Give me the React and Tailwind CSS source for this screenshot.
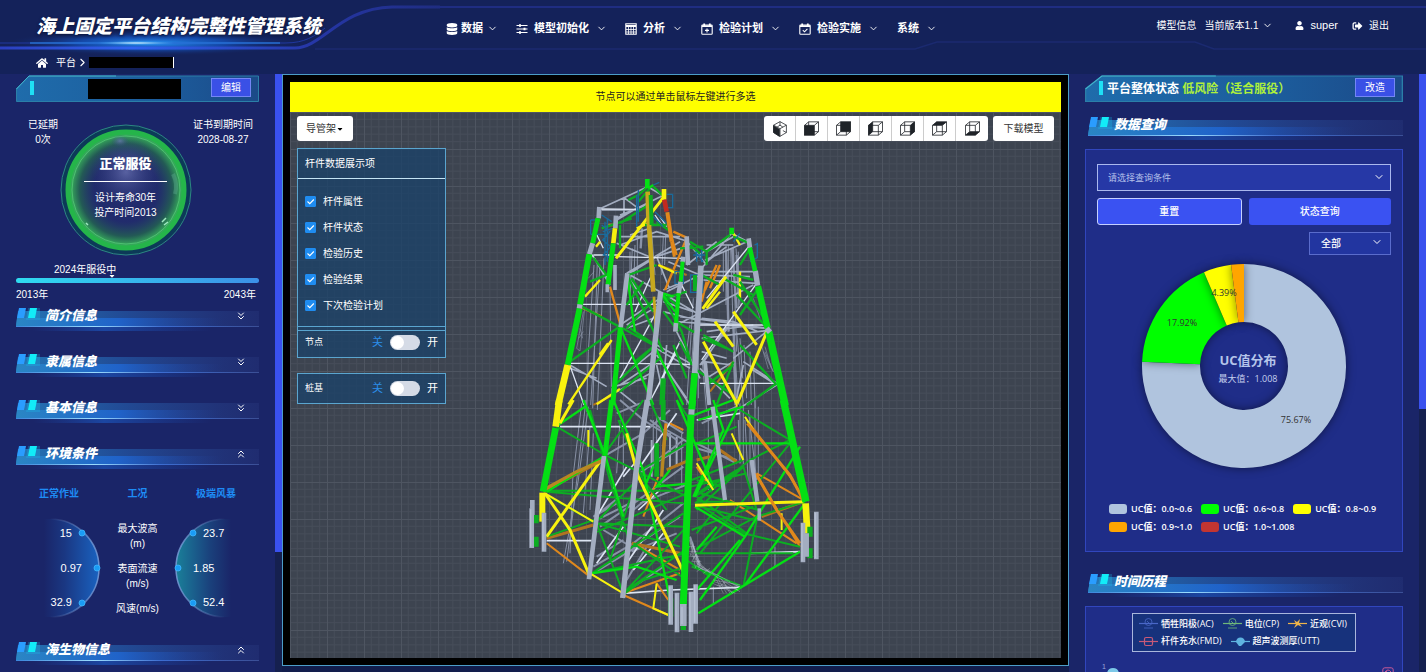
import React, { useId, useState } from 'react';
import { FaCaretDown, FaDatabase, FaHome, FaSignOutAlt, FaUser } from 'react-icons/fa';
import { ChevronDown, ChevronRight, ChevronsDown, ChevronsUp } from 'lucide-react';

const menuItems = [
  { label: '数据', icon: 'database' },
  { label: '模型初始化', icon: 'sliders' },
  { label: '分析', icon: 'calc' },
  { label: '检验计划', icon: 'calPlus' },
  { label: '检验实施', icon: 'calCheck' },
  { label: '系统', icon: null },
];

const displayOptions = ['杆件属性', '杆件状态', '检验历史', '检验结果', '下次检验计划'];

const ucRanges = [
  { label: 'UC值：0.0~0.6', color: '#b0c4de', value: 75.67, text: '75.67%', at: [155, 160] },
  { label: 'UC值：0.6~0.8', color: '#00ff00', value: 17.92, text: '17.92%', at: [41, 63] },
  { label: 'UC值：0.8~0.9', color: '#ffff00', value: 4.39, text: '4.39%', at: [83, 33] },
  { label: 'UC值：0.9~1.0', color: '#ffa500', value: 2.02 },
  { label: 'UC值：1.0~1.008', color: '#c23531', value: 0 },
];

const inspections = [
  { label: '牺牲阳极(AC)', color: '#4a67c8', mark: 'anode' },
  { label: '电位(CP)', color: '#6fb87a', mark: 'anode' },
  { label: '近观(CVI)', color: '#f0b54a', mark: 'spark' },
  { label: '杆件充水(FMD)', color: '#c85a78', mark: 'box' },
  { label: '超声波测厚(UTT)', color: '#5fb4e0', mark: 'gauge' },
];

const GREEN = '#04e014';
const DGREEN = '#0cae22';
const GREY = '#a3adc0';
const DGREY = '#8992a6';
const WHITE = '#dce4f2';
const YELLOW = '#f8f20e';
const ORANGE = '#e0881c';
const BROWN = '#b07420';
const TEAL = '#1a6b9c';

// members of the upper half of the jacket, back to front
const upperMembers = [
  [DGREY, 3, 'M222 300L205 560L200 740M232 290L218 730M240 300L212 720M252 280L232 735M270 380L275 720M330 260V380M337 250L330 400M345 240L340 420M352 210V330M395 200L405 330M430 215L425 330M437 210L434 300M520 400L500 720M510 480L495 600M525 460L515 600M535 450V700M548 600L560 740M610 260V380M618 250V420M625 240V500M632 250L640 500M640 245L650 560M648 250L660 420M655 260V430M640 480L655 720M650 500L670 720M660 520L668 640M672 540L680 700M690 560L694 720M640 540L645 720M700 580L706 730'],
  [DGREY, 7, 'M618 255L626 500M636 250L650 430M650 270L656 400M640 470L648 720M366 190L362 250'],
  [DGREY, 2, 'M190 440L170 550L180 558L194 430M176 520L190 500M180 490L188 520M205 340L222 320M700 400L720 460M730 560L760 620L735 560M724 540L745 612M735 545L754 610'],
  [GREY, 5, 'M238 132L312 98L383 65M245 135H360M312 98L352 128M312 98V150M290 160L432 90M300 150L380 120M290 165L350 130M383 65L430 92M300 240L410 200L500 228M290 235L400 280M330 210L390 190M300 215H480M320 325L480 230M410 275L498 245M410 275L450 375M410 275L330 325M220 275L270 360M445 290L540 330M498 225L560 300M500 300L590 230M545 310L635 205L686 232M555 285L686 228M560 260L640 215M560 240H640M545 320H700M550 330L690 335M550 345L710 355M560 290L620 245M470 480L700 360M430 440L530 465M430 410L520 440M440 380L540 330M330 330L420 380L540 450M330 345L400 440M300 480L420 400M320 480L410 425M320 490L400 460M470 470L740 490M480 455L745 490M630 470L545 600M640 580L745 495M560 500L700 480M540 600L630 480M550 590L640 600M545 560L620 580M560 640L640 590M540 610L630 700M670 590L770 655M690 610L770 660M670 600L650 700M770 660L650 735M150 600L260 665M150 610L230 640M410 540L520 600M400 545L510 610M400 560L300 640M410 570L500 700M300 660L390 600M280 665L380 640M290 680L400 620M300 680L350 720M410 600L430 690M440 540L430 660M470 500L540 640M425 590L510 720M440 400L500 380M430 375L480 355M545 520L740 497M545 460L640 470L715 500'],
  [WHITE, 4, 'M238 132L352 133M215 268L270 350M220 270H300M290 275L490 280M185 418H420M150 595H340L510 598M300 640L410 440M345 440L395 330M395 700L480 530M400 690L470 560M710 355L545 585M690 240L560 400M480 350L520 430M540 480H745M540 655H770M150 602L192 720M420 155L440 185M405 150L425 180M228 205L250 250'],
  [ORANGE, 7, 'M460 200L500 218M435 375L500 220M450 200L470 270M590 300L555 375M600 300L570 370M265 180H290M180 425L245 455M270 365L300 475M560 350L545 410'],
  [BROWN, 6, 'M415 300L500 330M280 690L220 720M570 680L640 590'],
  [YELLOW, 7, 'M384 175L350 190M240 345L195 395M228 245L240 230M600 380L560 430M640 205L660 240M660 320V400M415 300L470 325M145 718L275 525M230 718L300 672'],
  [DGREEN, 7, 'M245 190L335 160M300 175L385 120M355 110L390 70M325 105L355 90L383 65M400 65L432 95M300 250V180M220 278L260 330M210 350L270 325M185 425L298 485L150 590M300 485L400 540M322 330L430 560M335 340L400 440M325 330L410 300M320 420L370 350M425 385L470 420M425 390L485 500L515 600M430 440L475 500M405 540L330 490M430 400L500 380M405 540L275 670M420 580L300 680M345 590L400 545M510 230L560 260L630 210M560 260V300M510 240L540 265M545 330L600 360M640 215L690 235M640 330L700 345M715 370L660 450M650 390L745 492M550 510L640 560M548 520L620 550M530 615L640 690M560 660L640 600M770 655L680 720M660 540L770 660M590 720L640 590M480 530L510 590M405 400L320 490M470 470L520 500L545 495M460 540L500 640M375 180H440M410 170L445 195M480 250L550 245M610 340L700 390M660 350L745 480M690 250L660 300'],
  [GREEN, 7, 'M385 70L400 60M300 485L400 720M405 545L490 720M425 385L465 440M430 385L460 395M322 335L345 500'],
  [TEAL, 4, 'M212 165V208M212 165H236M212 208H262M245 180L270 200L248 225L272 245L250 270L278 280M262 160V290M255 170V300M458 88V128H436M458 88H440M350 90V185M355 75V170M400 60L418 52M512 330H548V382H512ZM465 320H490V355H465ZM704 240L712 236V278L690 290M530 260V290M545 255V292M660 205L640 230M395 150L430 185M405 140L440 175M245 150L275 170M248 200L278 190M520 270H555M525 260L550 290'],
  [YELLOW, 9, 'M430 98L288 280M618 335L548 432M585 470L640 545M550 530L650 715M640 440L710 540M743 495L652 715M265 535L240 570'],
  ['#c6a81e', 14, 'M383 80L385 150L400 380'],
  ['#c6a81e', 8, 'M402 395L408 500'],
  [GREEN, 14, 'M382 42V70M635 188V208'],
  [DGREEN, 12, 'M392 90L395 180M525 330V378'],
  [YELLOW, 14, 'M432 72V104'],
  ['#c22a20', 14, 'M433 104L440 140'],
  [ORANGE, 12, 'M442 142L455 230'],
  [ORANGE, 9, 'M455 230L463 275'],
  [GREY, 14, 'M500 214L504 300M686 220L690 250M288 152L286 190M238 126L236 160'],
  [YELLOW, 14, 'M285 190L280 235'],
  [GREEN, 15, 'M280 235L264 360M234 160L218 235'],
  [GREY, 11, 'M262 358V382M285 300V375'],
  [GREY, 15, 'M218 235L208 268'],
  [GREEN, 18, 'M208 268L180 420M179 430L143 600'],
  [GREY, 16, 'M180 418L178 430'],
  [YELLOW, 20, 'M143 600L114 722'],
  [GREY, 14, 'M490 275L488 292M482 350L476 385M468 472L466 500'],
  [GREEN, 12, 'M488 290L482 350M476 385L468 474'],
  [GREEN, 14, 'M689 248L706 320'],
  [GREY, 16, 'M706 318L713 362'],
  [GREEN, 19, 'M714 364L743 490'],
  [GREEN, 22, 'M746 500L796 722'],
  [GREY, 14, 'M322 325L302 487'],
  [GREEN, 15, 'M301 490L278 720'],
  [DGREEN, 16, 'M430 640L426 720'],
  [GREY, 16, 'M422 380L384 722M740 490L750 502'],
  [GREY, 12, 'M555 590L568 720'],
  [GREY, 17, 'M543 302L524 625'],
  [GREEN, 20, 'M524 625L516 722'],
];

// members of the lower half
const lowerMembers = [
  [DGREY, 3, 'M235 20L205 240L160 490M228 0L190 330L170 485M215 10L188 240L180 460M240 80L220 340M250 100L240 330M330 60L320 220M340 100V230M430 60V200M440 50V220M595 30V270M690 10V190M700 20V200M715 30L740 240M720 50V260M735 0V210M745 20V240M705 60L715 250M685 60L690 190M795 440V500M610 560V610M515 100V260'],
  [GREY, 6, 'M480 100V210M500 110V200M425 120V230'],
  [DGREY, 6, 'M440 50L520 100M420 60L500 120M470 90L540 130M560 130L680 190M560 145L680 180M575 70L680 20M280 170L400 100M260 360L380 300M270 380L400 290M250 500L370 430M250 520L380 440M390 220L520 120M400 210L520 140M385 300L520 200M390 310L540 250M370 430L520 310M370 440L510 350M365 455L500 400M340 580L460 500M350 540L410 440M260 470L340 420M540 410L570 500M330 0L400 60L480 110M320 40L390 10M480 30L400 100M250 350L320 310M260 345L330 290M560 500L690 560M280 390L380 450M370 330L430 280'],
  [WHITE, 5, 'M150 80H420M110 422H245M340 580L480 570L690 562M720 460L870 455M260 490L340 380M390 200L500 40M350 200L260 350M350 490L460 330M370 510L460 400M385 330L450 270M340 230L390 170M560 60L690 40'],
  [BROWN, 9, 'M110 415L250 375M100 275L280 180M755 350L880 305M365 430L510 460M470 210L540 180M560 180L600 170M630 150L680 185'],
  [ORANGE, 6, 'M110 430L240 530M340 585L475 645M710 60L840 230L885 300M735 220L870 440M370 430L510 510M340 580L510 520M740 220L880 300M660 300L860 430M440 550L475 600M480 70L520 90M560 200L600 260M445 230L400 350'],
  [DGREEN, 6, 'M140 80L285 165L385 215L530 290M100 272H520M110 275L520 310M100 280L260 370L520 380M110 410L280 350M245 520L530 460M245 520L520 340M260 370L340 580M265 360L400 220M250 400L530 280M370 430L530 540M345 575L530 380M350 570L540 440M400 0L285 160M385 215L530 130M385 220L300 480M420 0L470 120M500 0L540 60M260 370L510 440M560 310L700 400L870 440M560 300L690 210M555 460H850M560 445L740 350L885 305M570 460L840 130M550 290L620 240M690 30L840 120L720 180L555 310M560 130L680 80M545 240L700 180M540 260L710 220M570 280L745 330M560 330L700 200L740 330M680 210L555 290M570 320L730 360M710 400L560 290M545 500L700 560M530 480L600 530M545 390L730 320M345 580L400 540L530 500M640 260L560 240M560 400L640 300M740 360L700 560M560 305H640M230 20L285 165M240 30L300 240L360 430M325 60L400 240L470 330'],
  [GREEN, 7, 'M680 30L555 290M550 290L640 90L610 0M555 130H840M140 78L225 20M705 410L870 140M705 555L885 310M705 410L570 600M705 410L555 320M705 555L870 455M705 555L565 640M220 0L285 165L340 350M480 210L440 260L540 250M560 570L690 420M500 0L580 190L610 260M560 450L620 380M430 200L400 270M280 170L110 275M245 520L380 500L500 540M310 0L400 210L480 600M540 50L670 0M565 60L700 20'],
  [YELLOW, 9, 'M190 0L150 70M270 185L110 410M105 280L180 390L240 530M350 100L385 230L520 515M555 316L880 305'],
  [YELLOW, 6, 'M105 280L250 365M665 100L700 180M680 0V20M240 520L340 580M440 550L430 625L475 645M235 90V140M705 50L730 90M560 190L610 270M815 340V390'],
  [ORANGE, 9, 'M712 70L840 225L880 300M740 225L800 330L870 430M468 70L460 150'],
  ['#b88722', 10, 'M100 270L200 215L280 180M466 90L455 230'],
  [DGREEN, 14, 'M440 130V230M460 0V60'],
  ['#c8d0dc', 1, 'M535 410L560 490L620 530L690 575M545 430L575 500L660 545M540 460L600 520M550 440L540 470M560 460L545 485M570 480L555 505M580 500L560 515M600 505L580 520M620 540L640 580M640 545L660 580M650 540L630 560M610 540L690 555M620 555L680 565M540 420L556 500M548 425L566 505M536 440H556M538 455H562M542 470H568M546 485H574M620 530L650 580M632 535L668 582M612 545L684 570M608 550L676 580'],
  [GREY, 13, 'M608 20L645 300M725 180L742 305'],
  [GREY, 11, 'M748 325V362'],
  [YELLOW, 20, 'M148 0L137 80'],
  [GREEN, 20, 'M137 84L99 275'],
  [YELLOW, 18, 'M97 278V365'],
  [GREEN, 22, 'M820 0L888 305'],
  [YELLOW, 20, 'M887 310L892 400'],
  [GREEN, 15, 'M305 0L285 165'],
  [GREY, 14, 'M282 168L237 538'],
  [GREY, 16, 'M412 0L378 215L338 594'],
  [GREEN, 21, 'M548 0L545 30M543 44L520 615'],
  [GREY, 18, 'M545 28L544 44'],
  [DGREEN, 16, 'M78 345V370M78 410V440M900 380V410M900 445V475M482 595V650M550 600V650M520 665V690'],
  [GREY, 14, 'M67 300V345M65 325V444M102 338V455M890 400V470M919 335V478M879 368V487M482 556V674M557 553V671M501 578V697M543 575V696'],
  [GREY, 20, 'M520 612V678'],
  ['#b6c0d2', 4, 'M62 328V440M99 341V452M876 370V484M916 338V474M479 560V670M554 556V668M498 582V692M540 578V692M516 620V672'],
];

const MenuIcon = ({ name }) => {
  if (name === 'database') return <FaDatabase className="w-3 h-3" />;
  return (
    <svg className="w-3 h-3" viewBox="0 0 12 12" fill="none" stroke="currentColor" strokeWidth="1.1">
      {name === 'sliders' && (
        <>
          <path d="M0.5 2.5H11.5M0.5 6H11.5M0.5 9.5H11.5" />
          <path d="M4 1.2V3.8M8.5 4.7V7.3M4 8.2V10.8" strokeWidth="2" />
        </>
      )}
      {name === 'calc' && (
        <>
          <rect x="0.8" y="0.8" width="10.4" height="10.4" />
          <path d="M1 3H11" strokeWidth="2" />
          <path d="M1 6.5H11M1 9H11M3.5 4V11M6 4V11M8.5 4V11" strokeWidth="0.8" />
        </>
      )}
      {(name === 'calPlus' || name === 'calCheck') && (
        <>
          <rect x="0.8" y="2" width="10.4" height="9.2" rx="0.8" />
          <path d="M1 3.2H11M3.2 0.4V3M8.8 0.4V3" strokeWidth="1.8" />
          <path d={name === 'calPlus' ? 'M6 5.4V9.4M4 7.4H8' : 'M3.8 7.2L5.5 8.8L8.4 5.8'} />
        </>
      )}
    </svg>
  );
};

const cubeFaces = [
  'M1 12H31V42H1Z',
  'M14 1H44V31H14Z',
  'M1 12L14 1V31L1 42Z',
  'M31 12L44 1V31L31 42Z',
  'M1 12L14 1H44L31 12Z',
  'M1 42L14 31H44L31 42Z',
];

const CubeIcon = ({ face }) => (
  <svg className="w-[15px] h-[15px]" viewBox="0 0 45 43" fill="none" stroke="#1f2328" strokeWidth="3">
    <path d="M1.5 12H31V41.5H1.5ZM14 1.5H43.5V31H14ZM1.5 12L14 1.5M31 12L43.5 1.5M1.5 41.5L14 31M31 41.5L43.5 31" strokeWidth="2.4" />
    <path d={face} fill="#1f2328" stroke="none" />
  </svg>
);

const IsoIcon = () => (
  <svg className="w-4 h-4" viewBox="0 0 46 50" fill="none" stroke="#1f2328" strokeWidth="2.4">
    <path d="M23 2L43 13V36L23 48L3 36V13Z" />
    <path d="M3 15L21 26V48L3 36Z" fill="#1f2328" />
    <path d="M3 13L23 24L43 13M23 24V48M23 2V13L14 19M23 13L32 19M32 30L43 36" />
  </svg>
);

const Header = () => (
  <header className="relative bg-[#14225a]">
    <svg className="absolute inset-0 w-full h-full" viewBox="0 0 1426 74" preserveAspectRatio="none" fill="none">
      <defs>
        <radialGradient id="titleGlow">
          <stop offset="0" stopColor="#2a9cff" stopOpacity="0.95" />
          <stop offset="0.5" stopColor="#1460d8" stopOpacity="0.6" />
          <stop offset="1" stopColor="#14225a" stopOpacity="0" />
        </radialGradient>
        <linearGradient id="railLine">
          <stop offset="0" stopColor="#2b3fc0" />
          <stop offset="0.3" stopColor="#2f63f0" />
          <stop offset="0.7" stopColor="#2637a8" />
          <stop offset="1" stopColor="#1f2d82" />
        </linearGradient>
        <radialGradient id="spark">
          <stop offset="0" stopColor="#e8fbff" />
          <stop offset="1" stopColor="#36b4ff" stopOpacity="0" />
        </radialGradient>
      </defs>
      <ellipse cx="152" cy="43" rx="150" ry="13" fill="url(#titleGlow)" />
      <path d="M0 48H295C322 48 340 8 392 7H440" stroke="url(#railLine)" strokeWidth="3" />
      <path d="M440 7H1426" stroke="#1f2d82" strokeWidth="2" />
      <path d="M0 43H285C305 43 315 36 325 28" stroke="#2038a0" strokeWidth="1" />
      <path d="M30 43H280" stroke="#2b8cf0" strokeWidth="1" />
      <path d="M315 49H915L937 42H1195L1214 49H1426" stroke="#1b2a70" strokeWidth="1.5" />
      <ellipse cx="136" cy="43" rx="40" ry="2" fill="url(#spark)" />
    </svg>
    <div className="relative flex items-center h-[53px] text-white">
      <h1 className="w-[436px] shrink-0 pl-9 text-[19px] leading-6 font-black italic whitespace-nowrap [text-shadow:0_1px_3px_#0a1438]">海上固定平台结构完整性管理系统</h1>
      <nav className="flex items-center gap-[10px] ml-1.5 pt-1 text-[11px] font-bold">
        {menuItems.map((item) => (
          <button key={item.label} className={`flex items-center px-1 cursor-pointer whitespace-nowrap ${item.icon === 'database' ? 'gap-[3px]' : 'gap-[6px]'}`}>
            {item.icon && <MenuIcon name={item.icon} />}
            {item.label}
            <ChevronDown className="w-[11px] h-[11px] ml-px" strokeWidth={2} />
          </button>
        ))}
      </nav>
      <div className="ml-auto mr-[37px] pb-0.5 flex items-center text-[11px] whitespace-nowrap">
        <span className="mr-2 text-[10px]">模型信息</span>
        <button className="flex items-center gap-1 text-[10px] cursor-pointer">
          当前版本1.1
          <ChevronDown className="w-[11px] h-[11px]" strokeWidth={2} />
        </button>
        <span className="flex items-center gap-1.5 ml-[22px]">
          <FaUser className="w-[9px] h-[9px]" />
          super
        </span>
        <button className="flex items-center gap-1.5 ml-3.5 text-[10px] cursor-pointer">
          <FaSignOutAlt className="w-[11px] h-[10px]" />
          退出
        </button>
      </div>
    </div>
    <div className="relative flex items-center h-[21px] pl-9 pb-0.5 text-[10px] text-white">
      <FaHome className="w-3 h-3 mr-2" />
      <a href="#platform">平台</a>
      <ChevronRight className="w-[13px] h-[13px]" strokeWidth={2} />
      <span className="w-[85px] h-[11px] bg-black border-r border-white" />
    </div>
  </header>
);

const TitleBar = ({ children, action }) => {
  const id = useId();
  return (
    <div className="relative h-[27px] flex items-center pl-3.5 pr-2">
      <svg className="absolute inset-0 w-full h-full" viewBox="0 0 243 27" preserveAspectRatio="none">
        <defs>
          <linearGradient id={id}>
            <stop offset="0" stopColor="#1f6cab" />
            <stop offset="0.6" stopColor="#1c5c9c" />
            <stop offset="1" stopColor="#1b4a88" />
          </linearGradient>
        </defs>
        <path d="M0.5 26.5V13.5L13 1H242.5V26.5Z" fill={`url(#${id})`} stroke="#2b7fa8" />
        <path d="M0.5 14L13 1H100" fill="none" stroke="#42b5cc" />
      </svg>
      <span className="relative w-1 h-3.5 mb-px bg-[#1fe0f5]" />
      {children}
      <button className="relative ml-auto h-[19px] px-[9px] mb-0.5 bg-[#3a50e6] border border-[#7486f5] text-[10px] leading-none text-white cursor-pointer">{action}</button>
    </div>
  );
};

const SectionTitle = ({ children, icon, inset }) => {
  const id = useId();
  return (
    <div className="relative h-6">
      <svg className="absolute inset-0 w-full h-full" viewBox="0 0 243 24" preserveAspectRatio="none">
        <defs>
          <linearGradient id={`${id}a`}>
            <stop offset="0" stopColor="#2478b8" />
            <stop offset="0.45" stopColor="#23539f" stopOpacity="0.8" />
            <stop offset="1" stopColor="#2a3a80" stopOpacity="0.35" />
          </linearGradient>
          <linearGradient id={`${id}b`}>
            <stop offset="0" stopColor="#2a86c4" />
            <stop offset="0.42" stopColor="#2064cc" stopOpacity="0.95" />
            <stop offset="0.85" stopColor="#24419a" stopOpacity="0" />
          </linearGradient>
          <linearGradient id={`${id}c`}>
            <stop offset="0" stopColor="#3a86dc" />
            <stop offset="0.32" stopColor="#9adcff" />
            <stop offset="0.6" stopColor="#3c6cd0" />
            <stop offset="1" stopColor="#3b4f96" />
          </linearGradient>
          <linearGradient id={`${id}d`}>
            <stop offset="0.05" stopColor="#1c50b8" stopOpacity="0" />
            <stop offset="0.35" stopColor="#1c5cc8" stopOpacity="0.6" />
            <stop offset="0.8" stopColor="#1c50b8" stopOpacity="0" />
          </linearGradient>
        </defs>
        <path d="M2 3H243V18H0Z" fill={`url(#${id}a)`} />
        <path d="M1 10H243V18H0Z" fill={`url(#${id}b)`} />
        <path d="M0 18H243V19H0Z" fill={`url(#${id}c)`} />
        <path d="M5 19H243V23H5Z" fill={`url(#${id}d)`} />
      </svg>
      <svg className="absolute left-0 top-0 w-[26px] h-6" viewBox="0 0 26 24">
        <path d="M3 0H10L8 10H1Z" fill="#2a9dff" />
        <path d="M12 0H24V12H10Z" fill="#16c8f0" opacity="0.25" />
        <path d="M14 0H21L19 10H12Z" fill="#12ecf8" />
      </svg>
      <h2 className={`relative flex items-center justify-between pr-3 text-[13px] leading-4 font-black italic text-white ${inset}`}>
        {children}
        {icon}
      </h2>
    </div>
  );
};

const StatusRing = () => (
  <div className="relative w-[132px] h-[132px] flex flex-col items-center text-white">
    <svg className="absolute inset-0 w-full h-full" viewBox="0 0 132 132" fill="none">
      <defs>
        <radialGradient id="orb">
          <stop offset="0.55" stopColor="#26306f" stopOpacity="0.6" />
          <stop offset="0.8" stopColor="#235a55" />
          <stop offset="1" stopColor="#3cc25c" />
        </radialGradient>
        <radialGradient id="orbShine">
          <stop offset="0" stopColor="#7078b8" stopOpacity="0.7" />
          <stop offset="1" stopColor="#3a4288" stopOpacity="0" />
        </radialGradient>
      </defs>
      <circle cx="66" cy="66" r="62" stroke="#0c3a58" strokeWidth="5" />
      <circle cx="66" cy="66" r="65" stroke="#2b8a80" />
      <circle cx="66" cy="66" r="58" fill="url(#orb)" stroke="#25b54a" strokeWidth="5" />
      <circle cx="66" cy="66" r="54" stroke="#5fd880" opacity="0.6" />
      <circle cx="66" cy="48" r="34" fill="url(#orbShine)" />
      <ellipse cx="60" cy="17" rx="9" ry="6" fill="url(#orbShine)" />
      <path d="M102 98L106 94M104 101L108 98M26 99L28 101" stroke="#9fe8c0" strokeWidth="1.5" />
      <path d="M113 50Q118 60 115 70" stroke="#5fae90" strokeWidth="4" opacity="0.4" />
    </svg>
    <strong className="relative mt-[30px] text-[13px] leading-5 font-black">正常服役</strong>
    <span className="relative w-[83px] h-px mt-[7px] mb-2 bg-white" />
    <span className="relative text-[10px] leading-[15px] text-center">
      设计寿命30年
      <br />
      投产时间2013
    </span>
  </div>
);

const ConditionArc = ({ values, mirrored }) => (
  <div className="relative w-[76px] h-[100px]">
    <svg className={`absolute inset-0 w-full h-full ${mirrored ? '-scale-x-100' : ''}`} viewBox="0 0 76 100" fill="none">
      <defs>
        <linearGradient id={mirrored ? 'arcR' : 'arcL'}>
          <stop offset="0.2" stopColor={mirrored ? '#1a7fa8' : '#1a62c0'} stopOpacity="0" />
          <stop offset="0.5" stopColor={mirrored ? '#1a7fa8' : '#1a62c0'} stopOpacity="0.3" />
          <stop offset="1" stopColor={mirrored ? '#1a8098' : '#1a62c0'} />
        </linearGradient>
        <linearGradient id={mirrored ? 'rimR' : 'rimL'}>
          <stop offset="0" stopColor="#8fb4e8" stopOpacity="0" />
          <stop offset="1" stopColor="#7ea4e0" stopOpacity="0.8" />
        </linearGradient>
      </defs>
      <path d="M4 1H24A49 49 0 0 1 24 99H4Z" fill={`url(#${mirrored ? 'arcR' : 'arcL'})`} />
      <path d="M24 1A49 49 0 0 1 24 99" stroke={`url(#${mirrored ? 'rimR' : 'rimL'})`} strokeWidth="1.5" />
      {[[56, 15], [71, 50], [56, 85]].map(([x, y]) => (
        <circle key={y} cx={x} cy={y} r="3" fill="#1a9cf5" stroke="#3fb8ff" strokeWidth="0.8" />
      ))}
    </svg>
    <div className={`relative h-full flex flex-col justify-between py-2 text-[11px] leading-[15px] ${mirrored ? 'items-start pl-5' : 'items-end pr-5'}`}>
      {values.map((v, i) => (
        <span key={v} className={i === 1 ? '' : mirrored ? 'pl-2.5' : 'pr-2.5'}>{v}</span>
      ))}
    </div>
  </div>
);

const LeftPanel = () => (
  <aside className="flex w-[282px] shrink-0 overflow-hidden bg-[#1a2568] text-white">
    <div className="flex-1 min-w-0 pt-px pl-4 pr-4">
      <TitleBar action="编辑">
        <span className="relative w-[93px] h-5 ml-[54px] bg-black" />
      </TitleBar>
      <div className="relative flex justify-between pt-[15px] px-1 h-[160px] text-[10px] leading-[15px] text-center">
        <p className="pl-2">已延期<br />0次</p>
        <div className="absolute left-1/2 -translate-x-1/2 top-[22px] -ml-3">
          <StatusRing />
        </div>
        <p className="pr-0.5">证书到期时间<br />2028-08-27</p>
      </div>
      <div className="text-[10px] leading-[15px]">
        <div className="pl-[38px]">2024年服役中</div>
        <div className="relative h-[5px] mt-px rounded-full bg-gradient-to-r from-[#2fdcf0] to-[#3c90e8]">
          <FaCaretDown className="absolute left-[38%] -top-[6px] w-2 h-2" />
        </div>
        <div className="flex justify-between pt-1 pr-[3px]">
          <span>2013年</span>
          <span>2043年</span>
        </div>
      </div>
      <div className="flex flex-col gap-[22px] pt-1.5">
        {['简介信息', '隶属信息', '基本信息'].map((name) => (
          <SectionTitle key={name} inset="pl-[29px]" icon={<ChevronsDown className="w-3 h-3" strokeWidth={2} />}>{name}</SectionTitle>
        ))}
        <SectionTitle inset="pl-[29px]" icon={<ChevronsUp className="w-3 h-3" strokeWidth={2} />}>环境条件</SectionTitle>
      </div>
      <div className="flex justify-between px-[23px] pt-4 text-[10px] leading-4 font-bold text-[#1e8cf5]">
        <span>正常作业</span>
        <span>工况</span>
        <span>极端风暴</span>
      </div>
      <div className="flex justify-between items-start px-[10px] pt-4 mb-6">
        <ConditionArc values={['15', '0.97', '32.9']} />
        <div className="flex flex-col gap-2.5 pt-[3px] text-[10px] leading-[15px] text-center">
          <span>最大波高<br />(m)</span>
          <span>表面流速<br />(m/s)</span>
          <span>风速(m/s)</span>
        </div>
        <ConditionArc values={['23.7', '1.85', '52.4']} mirrored />
      </div>
      <SectionTitle inset="pl-[29px]" icon={<ChevronsUp className="w-3 h-3" strokeWidth={2} />}>海生物信息</SectionTitle>
    </div>
    <div className="w-[7px] bg-[#15204f]">
      <div className="h-[80%] bg-[#3a51ee]" />
    </div>
  </aside>
);

const Switch = ({ label }) => {
  const id = useId();
  return (
    <div className="flex items-center pl-[7px] pr-[7px] text-[11px] text-white">
      <label htmlFor={id} className="text-[9px]">{label}</label>
      <span className="ml-auto text-[#2b8de8]">关</span>
      <input
        id={id}
        type="checkbox"
        role="switch"
        className="appearance-none w-[30px] h-[15px] mx-[7px] rounded-full bg-[#d5dbe6] cursor-pointer before:block before:w-[13px] before:h-[13px] before:m-px before:rounded-full before:bg-white checked:bg-[#1989fa] checked:before:translate-x-[15px]"
      />
      <span>开</span>
    </div>
  );
};

const JacketModel = () => (
  <svg className="absolute inset-0 w-full h-full" viewBox="290 112 771 546" fill="none">
    <g transform="translate(520 165) scale(0.3333)">
      {upperMembers.map(([color, width, d], i) => (
        <path key={i} d={d} stroke={color} strokeWidth={width} />
      ))}
    </g>
    <g transform="translate(510 400) scale(0.3333)">
      {lowerMembers.map(([color, width, d], i) => (
        <path key={i} d={d} stroke={color} strokeWidth={width} />
      ))}
    </g>
  </svg>
);

const ModelViewer = () => {
  const [checked, setChecked] = useState(displayOptions);

  const toggle = (name) => {
    setChecked(checked.includes(name) ? checked.filter((n) => n !== name) : [...checked, name]);
  };

  return (
    <main className="flex-1 min-w-0 flex flex-col mb-1.5 p-[7px] bg-black border border-[#4c9dc8]">
      <p className="h-[30px] shrink-0 bg-[#ffff00] text-[10px] leading-[30px] text-center text-[#222]">节点可以通过单击鼠标左键进行多选</p>
      <div className="relative flex-1 min-h-0 overflow-hidden bg-[#3d4450]">
        <svg className="absolute inset-0 w-full h-full">
          <defs>
            <pattern id="grid" width="37" height="37" patternUnits="userSpaceOnUse">
              <path d="M7.4 0V37M14.8 0V37M22.2 0V37M29.6 0V37M0 7.4H37M0 14.8H37M0 22.2H37M0 29.6H37" stroke="#454c58" strokeWidth="1" />
              <path d="M0.5 0V37M0 0.5H37" stroke="#4e5561" strokeWidth="1" />
            </pattern>
          </defs>
          <rect width="100%" height="100%" fill="url(#grid)" />
        </svg>
        <JacketModel />
        <div className="relative flex items-start pt-1 px-[7px] text-[10px] text-[#333]">
          <button className="flex items-center justify-center w-14 h-[25px] rounded-[3px] bg-white cursor-pointer">
            导管架
            <FaCaretDown className="w-2 h-2 text-black" />
          </button>
          <div className="flex ml-auto rounded-[3px] bg-white divide-x divide-[#ccc]">
            <button aria-label="iso" className="w-8 h-[25px] flex items-center justify-center cursor-pointer"><IsoIcon /></button>
            {cubeFaces.map((face) => (
              <button key={face} aria-label="view" className="w-8 h-[25px] flex items-center justify-center cursor-pointer"><CubeIcon face={face} /></button>
            ))}
          </div>
          <button className="w-[61px] h-[25px] ml-[5px] rounded-[3px] bg-white cursor-pointer">下载模型</button>
        </div>
        <div className="relative w-[149px] mt-[7px] ml-[7px]">
          <section className="bg-[#1a426a]/75 border border-[#5aa5cf] text-[10px] text-white">
            <h3 className="h-[30px] pl-[7px] leading-[30px] border-b border-[#c5e4f4]">杆件数据展示项</h3>
            <div className="pt-[9px] pb-[8px] pl-[7px]">
              {displayOptions.map((name) => (
                <label key={name} className="flex items-center gap-[7px] h-[26px] cursor-pointer">
                  <span className="relative flex">
                    <input
                      type="checkbox"
                      checked={checked.includes(name)}
                      onChange={() => toggle(name)}
                      className="peer appearance-none w-[11px] h-[11px] rounded-[1px] border border-[#1f8cf0] checked:bg-[#1f8cf0]"
                    />
                    <svg className="absolute inset-0 hidden peer-checked:block w-[11px] h-[11px] pointer-events-none" viewBox="0 0 11 11" fill="none" stroke="#fff" strokeWidth="1.1">
                      <path d="M2.5 5.5L4.8 7.7L8.8 3.5" />
                    </svg>
                  </span>
                  {name}
                </label>
              ))}
            </div>
          </section>
          <section className="h-[31px] pt-[3px] bg-[#1a426a]/75 border border-t-0 border-[#5aa5cf]">
            <div className="border-t border-[#5aa5cf] pt-[3px]">
              <Switch label="节点" />
            </div>
          </section>
          <section className="h-[31px] mt-[15px] pt-1.5 bg-[#1a426a]/75 border border-[#5aa5cf]">
            <Switch label="桩基" />
          </section>
        </div>
      </div>
    </main>
  );
};

const slicePath = (from, to) => {
  const c = 103;
  const pt = (frac, r) => {
    const a = frac * 2 * Math.PI;
    return `${c + r * Math.sin(a)} ${c - r * Math.cos(a)}`;
  };
  const large = to - from > 0.5 ? 1 : 0;
  return `M${pt(from, 102)}A102 102 0 ${large} 1 ${pt(to, 102)}L${pt(to, 44)}A44 44 0 ${large} 0 ${pt(from, 44)}Z`;
};

const UcChart = () => {
  let sum = 0;
  const slices = ucRanges.filter((r) => r.value > 0).map((r) => {
    const from = sum;
    sum += r.value / 100;
    return { ...r, d: slicePath(from, Math.min(sum, 1)) };
  });

  return (
    <svg className="w-[206px] h-[206px] overflow-visible" viewBox="0 0 206 206" textAnchor="middle">
      {slices.map((s) => (
        <path key={s.label} d={s.d} fill={s.color} className="drop-shadow-[0_0_5px_rgba(0,0,0,0.5)]" />
      ))}
      {slices.filter((s) => s.text).map((s) => (
        <text key={s.text} x={s.at[0]} y={s.at[1]} fontSize="9" fill="#333">{s.text}</text>
      ))}
      <text x="107" y="102" fontSize="13" fontWeight="bold" fill="#b5c4ea">UC值分布</text>
      <text x="107" y="119" fontSize="9" fill="#c5d0ee">最大值：1.008</text>
    </svg>
  );
};

const SeriesMark = ({ color, mark }) => (
  <svg className="w-[19px] h-[11px]" viewBox="0 0 19 11" fill="none" stroke={color} strokeWidth="1.2">
    <path d="M0 5.5H19" />
    {mark === 'anode' && <path d="M6 4A3.5 3.5 0 1 1 13 4A3.5 3.5 0 1 1 6 4M5 10H14M8 3L11 6" strokeWidth="0.8" />}
    {mark === 'spark' && <path d="M6 2L9 4L12 1L11 5L14 9L10 7L6 10L8 6Z" fill={color} stroke="none" />}
    {mark === 'box' && <rect x="5.5" y="1.5" width="8" height="8" rx="1.5" />}
    {mark === 'gauge' && <path d="M5 6A4.5 4.5 0 0 1 14 6L10 10H8Z" fill={color} stroke="none" />}
  </svg>
);

const RightPanel = () => (
  <aside className="flex w-[357px] shrink-0 overflow-hidden bg-[#1a2568] text-white">
    <div className="flex-1 min-w-0 pt-px pl-4 pr-4">
      <TitleBar action="改造">
        <h2 className="relative ml-1 text-[12px] font-bold whitespace-nowrap">
          平台整体状态 <span className="text-[#aef03c]">低风险（适合服役）</span>
        </h2>
      </TitleBar>
      <div className="pt-[15px] pl-[3px]">
        <SectionTitle inset="pl-[26px]">数据查询</SectionTitle>
      </div>
      <section className="h-[403px] mt-2 px-[11px] pt-[14px] bg-[#1f2d88] border border-[#3146bd] font-['Open_Sans','Noto_Sans_CJK_SC',sans-serif]">
        <div className="relative">
          <select aria-label="查询条件" className="block appearance-none w-full h-[27px] pl-2.5 bg-[#2638a6] border border-[#aab8ee] text-[9px] text-[#b4c0ea]">
            <option>请选择查询条件</option>
          </select>
          <ChevronDown className="absolute right-1.5 top-[7px] w-3 h-3 pointer-events-none" strokeWidth={2} />
        </div>
        <div className="flex gap-[7px] mt-[7px] text-[10px] font-medium">
          <button className="flex-1 h-[27px] rounded-[3px] bg-[#3a52f2] border border-[#c5d0ff] cursor-pointer">重置</button>
          <button className="flex-1 h-[27px] rounded-[3px] bg-[#3a52f2] cursor-pointer">状态查询</button>
        </div>
        <div className="relative w-[82px] ml-auto mt-[7px]">
          <select aria-label="范围" className="block appearance-none w-full h-[23px] pl-[11px] bg-[#2235a0] border border-[#5a6ccc] text-[10px] font-medium text-white">
            <option>全部</option>
          </select>
          <ChevronDown className="absolute right-2 top-[4px] w-3 h-3 pointer-events-none" strokeWidth={2} />
        </div>
        <div className="flex justify-center mt-2">
          <UcChart />
        </div>
        <ul className="flex flex-wrap gap-x-[9px] gap-y-1 mt-[33px] pl-3 text-[9px] leading-[14px] font-semibold">
          {ucRanges.map((r) => (
            <li key={r.label} className="flex items-center gap-1">
              <span className="w-[18px] h-[10px] rounded-[3px]" style={{ backgroundColor: r.color }} />
              {r.label}
            </li>
          ))}
        </ul>
      </section>
      <div className="pt-[22px] pl-[3px]">
        <SectionTitle inset="pl-[26px]">时间历程</SectionTitle>
      </div>
      <section className="mt-2 pt-1.5 px-[46px] h-40 bg-[#1f2d88] border border-[#3146bd]">
        <ul className="flex flex-wrap gap-x-[9px] gap-y-[2px] h-[39px] py-[2px] pl-1.5 bg-[#17327c] border border-[#a9b6dc] text-[9px] leading-[14px] font-medium whitespace-nowrap font-['Open_Sans','Noto_Sans_CJK_SC',sans-serif]">
          {inspections.map((s) => (
            <li key={s.label} className="flex items-center gap-[3px]">
              <SeriesMark color={s.color} mark={s.mark} />
              {s.label}
            </li>
          ))}
        </ul>
        <div className="flex justify-between items-start mt-[11px] -ml-[30px] -mr-[38px]">
          <span className="flex items-start gap-px text-[7px] leading-[8px] text-[#9aa8d8]">
            1
            <svg className="w-3 h-3 mt-1" viewBox="0 0 12 12"><path d="M0 6Q1 1 6 1T12 6L8 12H4Z" fill="#7cc8e8" /></svg>
          </span>
          <svg className="w-3 h-3 mt-1" viewBox="0 0 12 12" fill="none" stroke="#c85a98"><rect x="0.8" y="0.8" width="10.4" height="10.4" rx="2" /><path d="M3 5Q6 1 9 5M4 4L8 9" /></svg>
        </div>
      </section>
    </div>
    <div className="w-[7px] bg-[#15204f]">
      <div className="h-[56%] bg-[#3a51ee]" />
    </div>
  </aside>
);

const App = () => (
  <div className="h-screen flex flex-col overflow-hidden bg-[#121d4c] font-['Liberation_Sans','Noto_Sans_CJK_SC',sans-serif]">
    <Header />
    <div className="flex-1 min-h-0 flex">
      <LeftPanel />
      <ModelViewer />
      <RightPanel />
    </div>
  </div>
);

export default App;
